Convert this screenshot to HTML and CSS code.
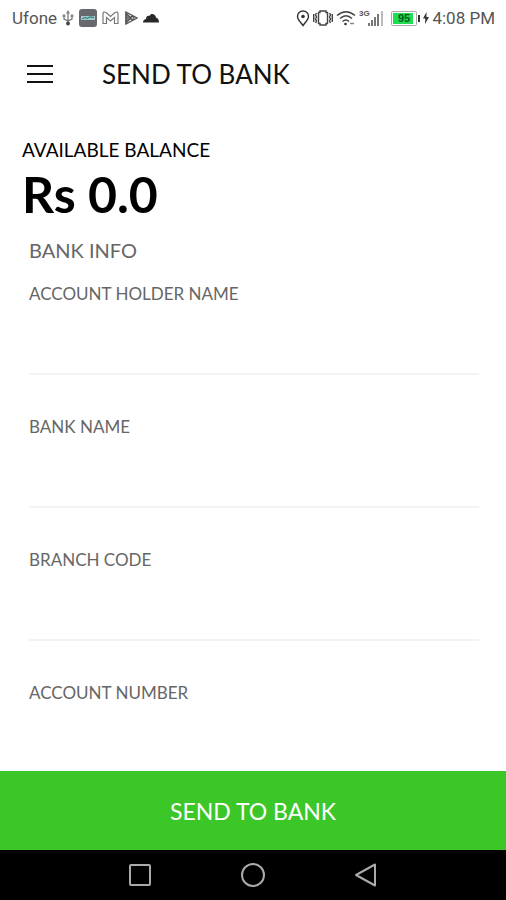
FILE: index.html
```html
<!DOCTYPE html>
<html lang="en">
<head>
<meta charset="utf-8">
<meta name="viewport" content="width=device-width, initial-scale=1">
<title>Send to Bank</title>
<link rel="stylesheet" href="styles.css">
</head>
<body>
<div class="app">
  <div class="status">
    <div class="status-group">
      <span>Ufone</span>
      <svg width="12" height="16" viewBox="0 0 12 16" fill="none" stroke="#777" stroke-width="1.3"><path d="M6 3v10M2 6v3l4 2 4-2V6"/><path d="M6 0l2.200 3.500H3.800zM.6 4.500h2.800v2.500H.6zM8.600 4.500h2.800v2.500H8.600z" fill="#888" stroke="none"/><circle cx="6" cy="13.500" r="1.900" fill="#444" stroke="none"/></svg>
      <svg width="18" height="18" viewBox="0 0 18 18"><rect width="18" height="18" rx="3" fill="#68696e"/><path d="M2 7h14v4H2z" fill="#a9c8ca"/><path d="M3 10l3-1.500 2 1 3-1.500 4 .5" fill="none" stroke="#328e91" stroke-width="1.300"/></svg>
      <svg width="17" height="14" viewBox="0 0 17 14" fill="none" stroke="#777" stroke-width="1.200"><path d="M1 12.500V3q0-3 3-1.500l4.500 4L13 1.500Q16 0 16 3v9.500h-3.500V6.500l-4 3.500-4-3.500v6z"/></svg>
      <svg width="14" height="14" viewBox="0 0 14 14" fill="none" stroke="#555" stroke-width="1.300"><path d="M2 1l11 6-11 6zM2 3l6 6M2 11l6-6"/><path d="M2 2l5 5-5 5z" fill="#777"/><circle cx="8.500" cy="7" r="1.500" fill="#fff"/></svg>
      <svg width="16" height="10" viewBox="0 0 16 10"><path d="M0 9.500Q0 6.500 3 6c0-3 2-3.500 3.500-3C8-.5 12.500 1 13 4.500c2 .5 3 2.500 3 5z" fill="#292929"/></svg>
    </div>
    <div class="status-group right">
      <svg width="14" height="17" viewBox="0 0 14 17"><path d="M7 15.500C4 11.500 1.500 9.500 1.500 6.500a5.500 5.500 0 0 1 11 0C12.500 9.500 10 11.500 7 15.500z" fill="none" stroke="#333" stroke-width="1.400"/><circle cx="7" cy="6.500" r="1.800" fill="#333"/></svg>
      <svg width="20" height="16" viewBox="0 0 20 16" fill="none" stroke="#444" stroke-width="1.400"><path d="M7 1h6v1.500h1.500v11H13V15H7v-1.500H5.500v-11H7z"/><path d="M3.500 3l-1 2 1 2-1 2 1 2-1 2M16.500 3l1 2-1 2 1 2-1 2 1 2M.7 4v8M19.300 4v8"/></svg>
      <svg width="20" height="16" viewBox="0 0 20 16" fill="none" stroke="#444" stroke-width="1.500"><path d="M1 5.500Q10-2 19 5.500M4 8.500Q10 3 16 8.500M6.500 11.500Q10 8.500 13 11.500"/><circle cx="9.500" cy="14" r="1.300" fill="#333" stroke="none"/><path d="M14 13.500h4" stroke="#888"/></svg>
      <svg width="25" height="18" viewBox="0 0 25 18"><text class="network" x="0" y="7">3G</text><path d="M9 14h2v3H9zM12 11h2v6h-2zM15 8h2v9h-2zM18 5h2v12h-2z" fill="#777"/><path d="M22 2h2v15h-2z" fill="#bbb"/></svg>
      <svg class="battery" width="29" height="15" viewBox="0 0 29 15"><rect x=".5" y=".5" width="25" height="14" rx="1" fill="#fff" stroke="#aaa"/><path d="M2 2h20v11H2z" fill="#20dc50"/><path d="M27 4h2v7h-2z" fill="#333"/><text class="charge" x="13" y="11">95</text></svg>
      <svg width="6" height="12" viewBox="0 0 6 12"><path d="M3.500 0L0 6.500h2.300L2 12l4-7H3.500z" fill="#333"/></svg>
      <span>4:08 PM</span>
    </div>
  </div>
  <header class="header">
    <button class="menu" type="button" aria-label="Menu"><svg width="26" height="18" viewBox="0 0 26 18"><path d="M0 0h26v2H0zM0 8h26v2H0zM0 16h26v2H0z" fill="#111"/></svg></button>
    <h1>SEND TO BANK</h1>
  </header>
  <main class="content">
    <div class="balance">
      <div class="balance-label">AVAILABLE BALANCE</div>
      <div class="amount">Rs 0.0</div>
    </div>
    <form class="form" id="bank-form">
      <h2>BANK INFO</h2>
      <div class="field"><label for="holder">ACCOUNT HOLDER NAME</label><input id="holder" type="text"></div>
      <div class="field"><label for="bank">BANK NAME</label><input id="bank" type="text"></div>
      <div class="field"><label for="branch">BRANCH CODE</label><input id="branch" type="text"></div>
      <div class="field"><label for="number">ACCOUNT NUMBER</label><input id="number" type="text"></div>
    </form>
  </main>
  <button class="submit" type="submit" form="bank-form">SEND TO BANK</button>
  <nav class="nav">
    <button type="button" aria-label="Recent apps"><svg width="26" height="26" viewBox="0 0 26 26"><rect x="3" y="3" width="20" height="20" rx="1"/></svg></button>
    <button type="button" aria-label="Home"><svg width="26" height="26" viewBox="0 0 26 26"><circle cx="13" cy="13" r="11"/></svg></button>
    <button type="button" aria-label="Back"><svg width="26" height="26" viewBox="0 0 26 26"><path d="M22 2.500v21L3 13z"/></svg></button>
  </nav>
</div>
</body>
</html>
```
FILE: styles.css
```css
* { box-sizing: border-box; }
body { margin: 0; background: #fff; color: #111; font-family: Lato, "Liberation Sans", sans-serif; }
button { border: 0; padding: 0; background: none; font: inherit; color: inherit; cursor: pointer; }
svg { display: block; flex: none; }
h1, h2 { margin: 0; font-weight: 400; }
.app { display: flex; flex-direction: column; height: 100vh; }
.status { display: flex; justify-content: space-between; align-items: center; height: 36px; padding: 0 11px 0 12px; font: 17px/20px Roboto, sans-serif; color: #555; flex: none; }
.status-group { display: flex; align-items: center; gap: 5px; }
.status-group.right { gap: 3px; }
.battery { margin-left: 4px; }
.network { font: bold 8px "Liberation Sans", sans-serif; fill: #555; }
.charge { font: bold 11px "Liberation Sans", sans-serif; fill: #075a1c; text-anchor: middle; }
.header { display: flex; align-items: center; gap: 49px; height: 76px; padding: 0 27px; flex: none; }
h1 { font-size: 26px; line-height: 32px; }
.content { flex: 1; min-height: 0; overflow-y: auto; scrollbar-width: none; padding-top: 26px; }
.balance { padding: 0 22px; color: #000; }
.balance-label { font-size: 19px; line-height: 24px; }
.amount { font-size: 50px; line-height: 64px; font-weight: 700; }
.form { padding: 12px 27px 0 29px; color: #666; }
h2 { font-size: 20px; line-height: 24px; margin-bottom: 20px; }
.field { display: flex; flex-direction: column; margin-bottom: 40px; }
.field label { font-size: 17px; line-height: 24px; }
.field input { height: 69px; padding: 0; border: 0; border-bottom: 2px solid #f3f3f3; border-radius: 0; background: none; font: inherit; color: #222; outline: none; }
.submit { flex: none; height: 79px; background: #3bc727; color: #fff; font-size: 23px; line-height: 28px; }
.nav { display: flex; justify-content: center; align-items: center; gap: 87px; height: 50px; background: #000; flex: none; }
.nav svg { fill: none; stroke: #aaa; stroke-width: 2; stroke-linejoin: round; }
```
